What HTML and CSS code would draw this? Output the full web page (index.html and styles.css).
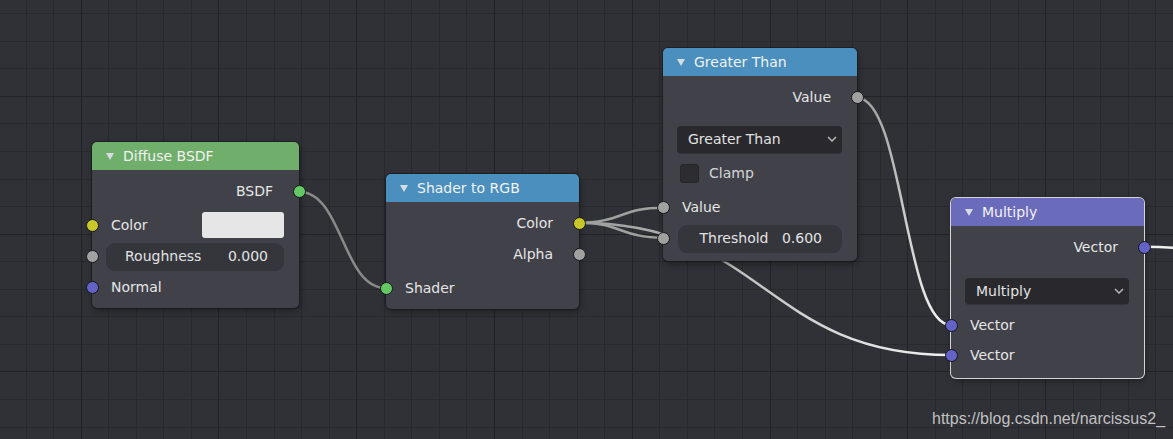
FILE: index.html
```html
<!DOCTYPE html>
<html>
<head>
<meta charset="utf-8">
<title>Node Editor</title>
<link rel="stylesheet" href="styles.css">
</head>
<body>
<div class="editor">
  <svg class="wires" width="1173" height="439" viewBox="0 0 1173 439">
    <defs>
      <linearGradient id="gVal" gradientUnits="userSpaceOnUse" x1="857" y1="98" x2="951" y2="325">
        <stop offset="0" stop-color="#a0a0a0"/>
        <stop offset="1" stop-color="#f2f2f2"/>
      </linearGradient>
      <linearGradient id="gCol" gradientUnits="userSpaceOnUse" x1="579" y1="223" x2="951" y2="355">
        <stop offset="0" stop-color="#9c9c9c"/>
        <stop offset="1" stop-color="#f2f2f2"/>
      </linearGradient>
    </defs>
    <path class="wire w-dim" d="M299 191.7 C342.4 191.7 342.3 288 385.7 288"/>
    <path class="wire w-mid" d="M578.7 222.7 C621 222.7 621 207.7 663.3 207.7"/>
    <path class="wire w-mid" d="M578.7 222.7 C621 222.7 621 237.7 663.3 237.7"/>
    <path class="wire w-col" d="M578.7 222.7 C764.9 222.7 764.8 355 951 355"/>
    <path class="wire w-val" d="M856.7 97.7 C903.9 97.7 903.8 325 951 325"/>
    <path class="wire w-hi" d="M1144 246.7 C1272 246.7 1272 300 1400 300"/>
  </svg>

  <div class="node node-diffuse">
    <div class="node-header hdr-green">
      <svg class="tri" width="8" height="7" viewBox="0 0 8 7"><polygon points="0,0 8,0 4,7"/></svg>
      <span class="title">Diffuse BSDF</span>
    </div>
    <div class="node-body">
      <div class="row out"><span class="label">BSDF</span><i class="sock s-shader"></i></div>
      <div class="row in gap7"><i class="sock s-color"></i><span class="label">Color</span><span class="swatch"></span></div>
      <div class="row in gap4"><i class="sock s-float"></i><div class="field field-rough"><span>Roughness</span><span>0.000</span></div></div>
      <div class="row in gap4"><i class="sock s-vector"></i><span class="label">Normal</span></div>
    </div>
  </div>

  <div class="node node-s2rgb">
    <div class="node-header hdr-blue">
      <svg class="tri" width="8" height="7" viewBox="0 0 8 7"><polygon points="0,0 8,0 4,7"/></svg>
      <span class="title">Shader to RGB</span>
    </div>
    <div class="node-body">
      <div class="row out"><span class="label">Color</span><i class="sock s-color"></i></div>
      <div class="row out gap4"><span class="label">Alpha</span><i class="sock s-float"></i></div>
      <div class="row in gap7"><i class="sock s-shader"></i><span class="label">Shader</span></div>
    </div>
  </div>

  <div class="node node-greater">
    <div class="node-header hdr-blue">
      <svg class="tri" width="8" height="7" viewBox="0 0 8 7"><polygon points="0,0 8,0 4,7"/></svg>
      <span class="title">Greater Than</span>
    </div>
    <div class="node-body body-tall">
      <div class="row out"><span class="label">Value</span><i class="sock s-float"></i></div>
      <div class="row gap15">
        <div class="dropdown"><span>Greater Than</span>
          <svg class="chev" width="10" height="6" viewBox="0 0 10 6"><polyline points="1,1 5,5 9,1"/></svg>
        </div>
      </div>
      <div class="row gap7 check-row"><span class="checkbox"></span><span class="label dim">Clamp</span></div>
      <div class="row in gap7"><i class="sock s-float"></i><span class="label">Value</span></div>
      <div class="row in gap4"><i class="sock s-float"></i><div class="field field-thresh"><span>Threshold</span><span>0.600</span></div></div>
    </div>
  </div>

  <div class="node node-multiply selected">
    <div class="node-header hdr-purple">
      <svg class="tri" width="8" height="7" viewBox="0 0 8 7"><polygon points="0,0 8,0 4,7"/></svg>
      <span class="title">Multiply</span>
    </div>
    <div class="node-body body-tall">
      <div class="row out"><span class="label">Vector</span><i class="sock s-vector"></i></div>
      <div class="row gap17">
        <div class="dropdown"><span>Multiply</span>
          <svg class="chev" width="10" height="6" viewBox="0 0 10 6"><polyline points="1,1 5,5 9,1"/></svg>
        </div>
      </div>
      <div class="row in gap7"><i class="sock s-vector"></i><span class="label">Vector</span></div>
      <div class="row in gap3"><i class="sock s-vector"></i><span class="label">Vector</span></div>
    </div>
  </div>

  <div class="watermark">https://blog.csdn.net/narcissus2_</div>
</div>
</body>
</html>
```

FILE: styles.css
```css
html, body {
  margin: 0;
  padding: 0;
  background: #303136;
}

.editor {
  position: relative;
  width: 1173px;
  height: 439px;
  overflow: hidden;
  font-family: "DejaVu Sans", "Noto Sans", sans-serif;
  font-size: 14px;
  color: #e6e6e6;
  background-color: #303136;
  background-image:
    repeating-linear-gradient(to right, transparent 0 80.69px, #222327 80.69px 81.69px, transparent 81.69px 137.78px),
    repeating-linear-gradient(to bottom, transparent 0 95.85px, #222327 95.85px 96.85px, transparent 96.85px 137.78px),
    repeating-linear-gradient(to right, transparent 0 25.58px, #28292d 25.58px 26.58px, transparent 26.58px 27.556px),
    repeating-linear-gradient(to bottom, transparent 0 13.18px, #28292d 13.18px 14.18px, transparent 14.18px 27.556px);
}

.wires {
  position: absolute;
  left: 0;
  top: 0;
}

.wire {
  fill: none;
  stroke-width: 2.5;
  stroke-linecap: round;
}
.w-dim { stroke: #8a8a8a; }
.w-mid { stroke: #a0a0a0; }
.w-col { stroke: url(#gCol); }
.w-val { stroke: url(#gVal); }
.w-hi { stroke: #eeeeee; }

/* Nodes */
.node {
  position: absolute;
  background: #404149;
  border-radius: 5px;
  box-shadow: 0 0 0 1px rgba(20, 20, 24, 0.55), 1px 3px 6px rgba(0, 0, 0, 0.35);
}
.node.selected {
  box-shadow: 0 0 0 1px #d4d4d8, 1px 3px 6px rgba(0, 0, 0, 0.35);
}

.node-diffuse { left: 92px; top: 142px; width: 207px; }
.node-s2rgb { left: 386px; top: 174px; width: 193px; }
.node-greater { left: 663px; top: 48px; width: 194px; }
.node-multiply { left: 951px; top: 198px; width: 193px; }

.node-header {
  height: 27.5px;
  display: flex;
  align-items: center;
  padding-left: 14px;
  border-radius: 5px 5px 0 0;
  color: #f2f2f2;
}
.hdr-green { background: #70ae6c; }
.hdr-blue { background: #4a8fbd; }
.hdr-purple { background: #6b6bbb; }

.tri {
  fill: #d6dde0;
  margin-right: 9px;
  margin-top: 2px;
}
.title {
  line-height: 27.5px;
  padding-top: 2px;
}

.node-body {
  display: flex;
  flex-direction: column;
  padding: 8px 0 7px;
}
.node-body.body-tall {
  padding-bottom: 9px;
}

.row {
  position: relative;
  height: 27px;
  display: flex;
  align-items: center;
  line-height: 27px;
}
.row.out {
  justify-content: flex-end;
  padding-right: 26px;
}
.row.in {
  padding-left: 19px;
}
.gap3 { margin-top: 3px; }
.gap4 { margin-top: 4px; }
.gap7 { margin-top: 7px; }
.gap15 { margin-top: 15px; }
.gap17 { margin-top: 17px; }

.label.dim { color: #d6d6d6; }

/* Sockets */
.sock {
  position: absolute;
  top: 50%;
  width: 11px;
  height: 11px;
  margin-top: -6.5px;
  border: 1px solid #17171a;
  border-radius: 50%;
}
.row.in .sock { left: -6.5px; }
.row.out .sock { right: -6.5px; }
.s-shader { background: #63c763; }
.s-color { background: #c7c729; }
.s-float { background: #a1a1a1; }
.s-vector { background: #6363c7; }

/* Widgets */
.swatch {
  margin-left: auto;
  margin-right: 15px;
  width: 82px;
  height: 26px;
  background: #e6e6e6;
  border-radius: 3px;
}

.field {
  display: flex;
  justify-content: space-between;
  align-items: center;
  height: 27px;
  margin-left: -5px;
  margin-right: 15px;
  flex: 1;
  background: #35363c;
  border-radius: 9px;
  box-shadow: 0 1px 0 rgba(0, 0, 0, 0.18);
  color: #e2e2e2;
}
.field-rough { padding: 0 16px 0 19px; }
.field-thresh { padding: 0 20px 0 22px; margin-left: -4.5px; }

.dropdown {
  display: flex;
  align-items: center;
  justify-content: space-between;
  height: 27px;
  flex: 1;
  margin-left: 14px;
  margin-right: 15px;
  padding: 0 5px 0 11px;
  background: #28282d;
  border-radius: 4px;
  box-shadow: 0 1px 0 rgba(0, 0, 0, 0.2);
  color: #e2e2e2;
}
.node-multiply .dropdown {
  height: 26px;
}
.chev {
  fill: none;
  stroke: #b8b8b8;
  stroke-width: 1.5;
}

.check-row {
  padding-left: 17px;
}
.checkbox {
  width: 19px;
  height: 19px;
  box-sizing: border-box;
  background: #2c2c31;
  border: 1px solid #26262a;
  border-radius: 3px;
  margin-right: 10px;
}

.watermark {
  position: absolute;
  left: 932px;
  top: 411px;
  font-family: "Liberation Sans", Arial, sans-serif;
  font-size: 16px;
  line-height: 16px;
  color: rgba(222, 222, 222, 0.85);
  white-space: nowrap;
}
```
